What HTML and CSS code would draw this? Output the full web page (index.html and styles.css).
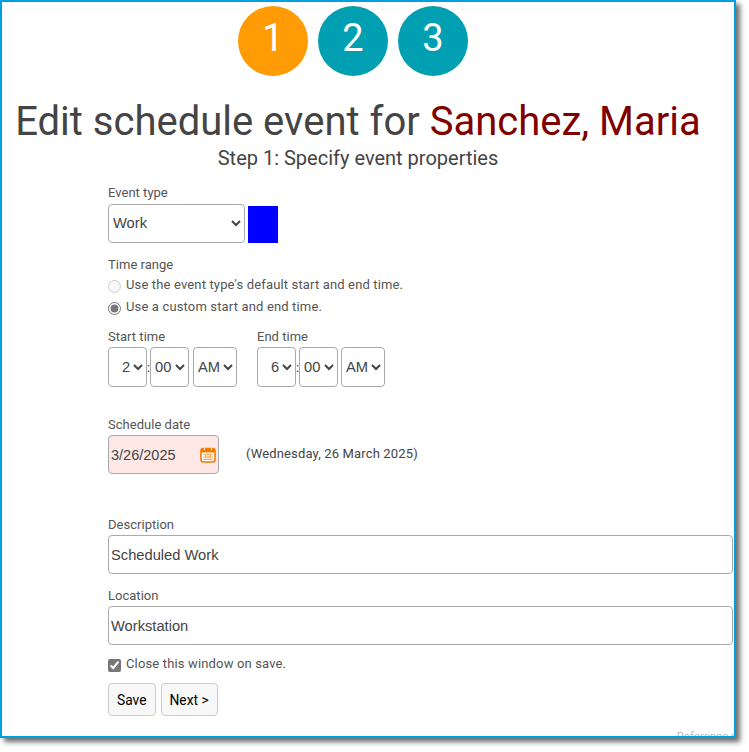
FILE: index.html
```html
<!DOCTYPE html>
<html lang="en">
<head>
<meta charset="utf-8">
<title>Edit schedule event</title>
<link rel="stylesheet" href="styles.css">
</head>
<body>
<div class="frame">
  <div class="steps">
    <div class="step step-active">1</div>
    <div class="step">2</div>
    <div class="step">3</div>
  </div>
  <h1 class="title">Edit schedule event for <span class="name">Sanchez, Maria</span></h1>
  <p class="subtitle">Step 1: Specify event properties</p>
  <form class="form">
    <label class="label">Event type</label>
    <div class="type-row">
      <select class="control type-select"><option>Work</option></select>
      <div class="swatch"></div>
    </div>
    <div class="label range-label">Time range</div>
    <label class="radio-row"><input type="radio" name="r" disabled><span>Use the event type's default start and end time.</span></label>
    <label class="radio-row radio-second"><input type="radio" name="r" checked><span>Use a custom start and end time.</span></label>
    <div class="times">
      <div class="time-group">
        <div class="label">Start time</div>
        <div class="time-row">
          <select class="control t-num"><option>2</option></select><span class="colon">:</span>
          <select class="control t-min"><option>00</option></select>
          <select class="control t-ampm"><option>AM</option></select>
        </div>
      </div>
      <div class="time-group">
        <div class="label">End time</div>
        <div class="time-row">
          <select class="control t-num"><option>6</option></select><span class="colon">:</span>
          <select class="control t-min"><option>00</option></select>
          <select class="control t-ampm"><option>AM</option></select>
        </div>
      </div>
    </div>
    <div class="label date-label">Schedule date</div>
    <div class="date-row">
      <div class="date-box">
        <span class="date-value">3/26/2025</span>
        <svg class="cal" viewBox="0 0 16 16" width="16" height="16" aria-hidden="true">
          <rect x="1" y="1.5" width="14" height="13.5" rx="2.5" fill="#fff" stroke="#f47a00" stroke-width="1.6"/>
          <path d="M1 3.5a2 2 0 0 1 2-2h10a2 2 0 0 1 2 2V5.4H1z" fill="#f47a00"/>
          <path d="M4.5 .6v2.4M11.5 .6v2.4" stroke="#fff" stroke-width="1"/>
          <path d="M3 7.5h10M3 10h10M3 12.5h10M5.4 7v6M8 7v6M10.6 7v6" stroke="#f79a4d" stroke-width=".8" fill="none"/>
        </svg>
      </div>
      <span class="date-long">(Wednesday, 26 March 2025)</span>
    </div>
    <div class="label desc-label">Description</div>
    <input class="control text-input" type="text" value="Scheduled Work">
    <div class="label loc-label">Location</div>
    <input class="control text-input" type="text" value="Workstation">
    <label class="check-row"><input type="checkbox" checked><span>Close this window on save.</span></label>
    <div class="buttons">
      <button type="button" class="btn">Save</button>
      <button type="button" class="btn">Next &gt;</button>
    </div>
  </form>
  <div class="watermark">Reference r</div>
</div>
</body>
</html>
```

FILE: styles.css
```css
* { box-sizing: border-box; }
html, body { margin: 0; padding: 0; background: #fff; }
body { width: 749px; height: 752px; overflow: hidden; font-family: Roboto, "Liberation Sans", sans-serif; color: #444; }
.frame {
  position: relative;
  width: 736px;
  height: 738px;
  border: 2px solid #009fdf;
  box-shadow: 4px 4px 5px rgba(60, 60, 60, .75);
  background: #fff;
  overflow: hidden;
}
.steps { display: flex; gap: 10px; padding: 4px 0 0 236px; }
.step {
  width: 70px; height: 70px; border-radius: 50%;
  background: #009fb2; color: #fff;
  font-size: 38px; line-height: 65px; text-align: center;
}
.step-active { background: #ff9b05; }
.title { margin: 23px 0 0; width: 712px; font-size: 40px; font-weight: 400; line-height: 46px; text-align: center; color: #444; white-space: nowrap; }
.name { color: #800000; }
.subtitle { margin: 1px 0 0; width: 712px; font-size: 20px; line-height: 24px; text-align: center; color: #444; }
.form { margin: 15px 0 0 106px; width: 625px; }
.label { display: block; font-size: 13px; line-height: 15px; color: #555; letter-spacing: .02px; }
.control {
  border: 1px solid #aaa; border-radius: 4px; background: #fff; color: #444;
  font-family: "Liberation Sans", Arial, sans-serif; font-size: 14.7px; margin: 0;
}
.type-row { display: flex; align-items: flex-end; gap: 3px; margin-top: 4px; }
.type-select { width: 137px; height: 39px; padding-bottom: 2px; }
.swatch { width: 30px; height: 37px; background: #00f; }
.range-label { margin-top: 14px; margin-bottom: 1px; }
.radio-row { display: flex; align-items: center; gap: 5px; height: 22px; font-size: 13px; color: #555; letter-spacing: .15px; }
.radio-row input { margin: 4px 0 0; width: 13px; height: 13px; accent-color: #777; }
.times { display: flex; gap: 20px; margin-top: 12px; }
.time-row { display: flex; align-items: center; margin-top: 3px; }
.time-row .control { height: 40px; font-size: 14.7px; }
.t-num { width: 39px; padding-left: 9px; }
.colon { width: 3px; font-size: 13px; }
.t-min { width: 39px; }
.t-ampm { width: 44px; margin-left: 4px; }
.time-group:last-child .t-ampm { margin-left: 3px; }
.date-label { margin-top: 30px; }
.date-row { display: flex; align-items: center; margin-top: 3px; }
.date-box {
  display: flex; align-items: center; justify-content: space-between;
  width: 111px; height: 39px; padding: 0 2px 0 2px;
  border: 1px solid #aaa; border-radius: 4px; background: #fde8e5;
  font-family: "Liberation Sans", Arial, sans-serif; font-size: 14.5px; color: #444;
}
.cal { flex: none; }
.date-long { margin: -3px 0 0 27px; font-size: 13px; color: #444; letter-spacing: .15px; }
.desc-label { margin-top: 43px; }
.text-input { display: block; width: 625px; height: 39px; margin-top: 3px; padding: 0 2px; }
.loc-label { margin-top: 14px; }
.check-row { display: flex; align-items: flex-start; gap: 5px; height: 16px; margin-top: 11px; font-size: 13px; line-height: 15px; color: #555; letter-spacing: .15px; }
.check-row input { margin: 3px 0 0; width: 13px; height: 13px; accent-color: #777; }
.buttons { display: flex; gap: 5px; margin-top: 11px; }
.btn {
  height: 33px; padding: 0 8px; margin: 0;
  border: 1px solid #ccc; border-radius: 4px; background: #f8f8f8; color: #000;
  font-family: Roboto, sans-serif; font-size: 13.8px;
}
.watermark { position: absolute; right: -1px; bottom: -6px; font-size: 11.5px; line-height: 12px; color: #bbb; }
```
